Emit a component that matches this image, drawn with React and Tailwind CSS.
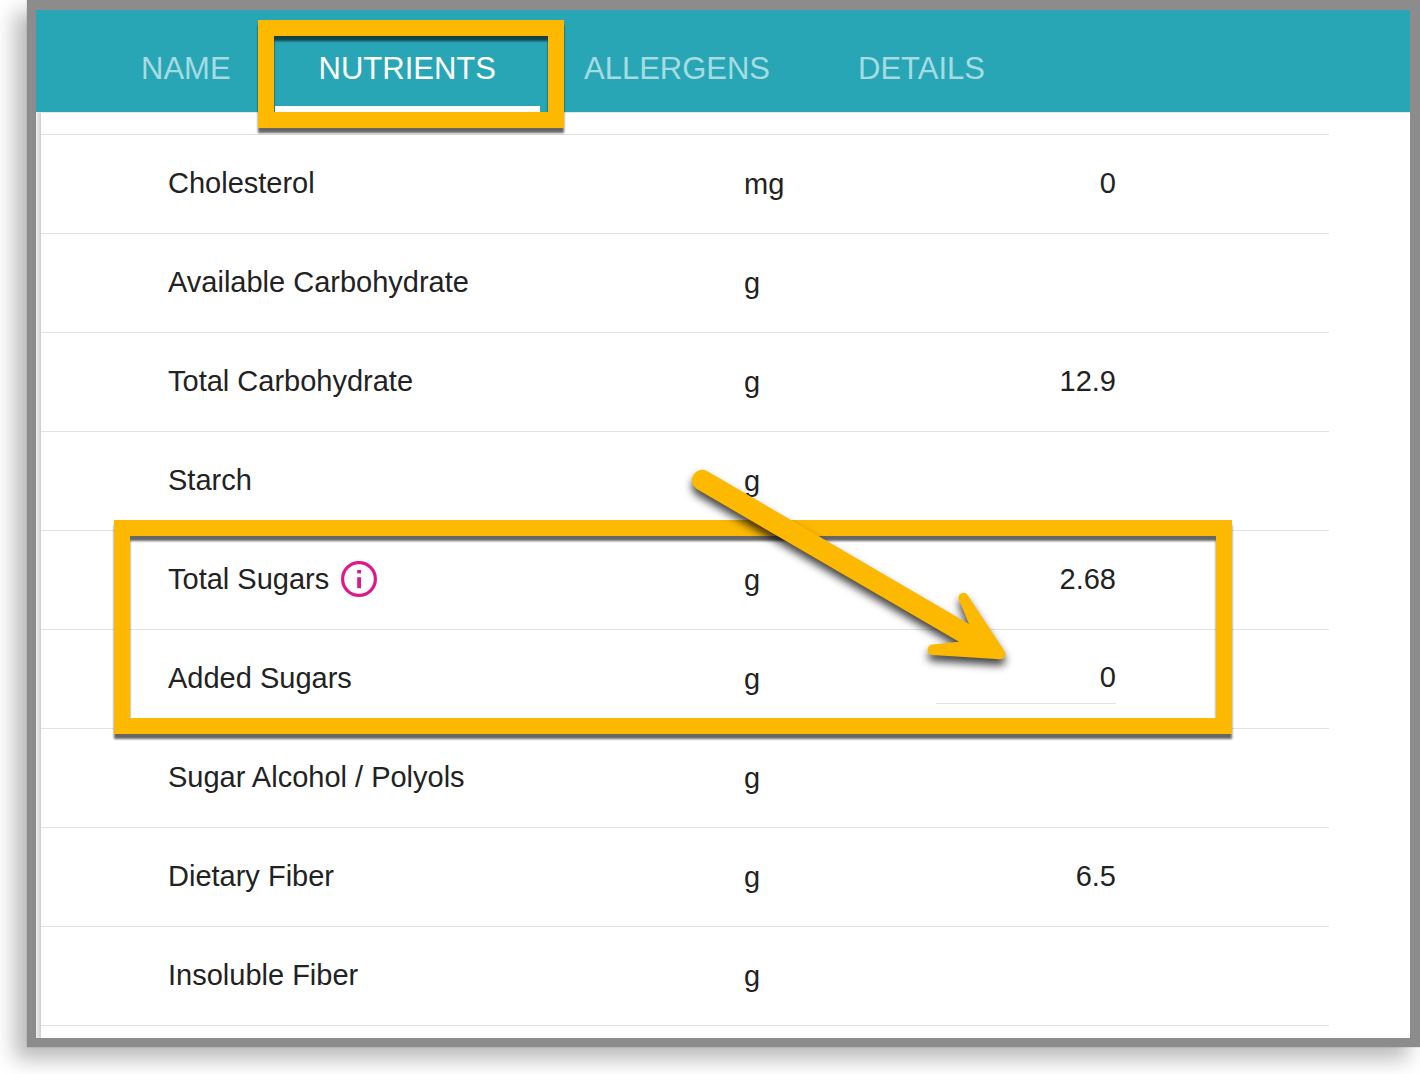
const tabs = ["NAME", "NUTRIENTS", "ALLERGENS", "DETAILS"];
const activeTab = "NUTRIENTS";

const nutrients = [
  { name: "Cholesterol", unit: "mg", value: "0" },
  { name: "Available Carbohydrate", unit: "g", value: "" },
  { name: "Total Carbohydrate", unit: "g", value: "12.9" },
  { name: "Starch", unit: "g", value: "" },
  { name: "Total Sugars", unit: "g", value: "2.68", info: true },
  { name: "Added Sugars", unit: "g", value: "0", editable: true },
  { name: "Sugar Alcohol / Polyols", unit: "g", value: "" },
  { name: "Dietary Fiber", unit: "g", value: "6.5" },
  { name: "Insoluble Fiber", unit: "g", value: "" },
];

const InfoIcon = () => (
  <svg viewBox="0 0 36 36" className="w-9 h-9" fill="none" aria-hidden="true">
    <circle cx="18" cy="18" r="16.4" stroke="#e0168c" strokeWidth="3.2" />
    <rect x="16.2" y="9" width="3.8" height="3.4" fill="#e0168c" />
    <rect x="16.2" y="16.2" width="3.8" height="11" fill="#e0168c" />
  </svg>
);

const Arrow = () => (
  <svg
    viewBox="0 0 340 220"
    className="w-[340px] h-[220px] overflow-visible drop-shadow-[0_6px_4px_rgba(0,0,0,0.75)]"
    aria-hidden="true"
  >
    <path
      d="M27.8 11.4 L289 164 L278.7 139.3 A5 5 0 0 1 287.7 135.2 L324.4 191 A5.2 5.2 0 0 1 319.6 199.2 L252.5 195 A5.2 5.2 0 0 1 253 184.6 L279 181.7 L16.7 29 A10.3 10.3 0 0 1 27.8 11.4 Z"
      fill="#fcb900"
    />
  </svg>
);

const Tab = ({ label }) => {
  const active = label === activeTab;
  return (
    <button
      type="button"
      role="tab"
      aria-selected={active}
      className={`relative px-11 pt-[41px] pb-[19px] border-b-6 text-[31px] leading-9 ${
        active ? "text-white border-white" : "text-[#a6dbe1] border-transparent"
      }`}
    >
      {label}
      {active && (
        <span className="absolute top-2.5 -bottom-[22px] -left-[17px] -right-6 border-16 border-[#fcb900] drop-shadow-[0_5px_1px_rgba(0,0,0,0.6)]" />
      )}
    </button>
  );
};

const NutrientRow = ({ row }) => {
  return (
    <tr className="border-b border-[#e2e2e2]">
      <th scope="row" className="pt-[30px] pb-8 pl-[127px] w-[703px] font-normal text-left">
        <div className="flex items-center gap-3 h-9">
          {row.name}
          {row.info && (
            <button type="button" aria-label="About total sugars">
              <InfoIcon />
            </button>
          )}
        </div>
      </th>
      <td className="w-[192px]">{row.unit}</td>
      <td className="pr-[213px] pb-0.5 text-right">
        {row.editable ? (
          <input
            type="text"
            aria-label={row.name}
            defaultValue={row.value}
            className="block w-[180px] h-[52px] ml-auto border-b border-[#e2e2e2] text-right outline-none"
          />
        ) : (
          row.value
        )}
      </td>
    </tr>
  );
};

const App = () => {
  return (
    <div className="bg-white pl-[27px] pb-[27px] overflow-hidden font-['Liberation_Sans',Arial,sans-serif]">
      <div className="border-t-10 border-r-10 border-b-9 border-l-9 border-[#8c8c8c] bg-white shadow-[0_0_1px_rgba(0,0,0,0.4),-12px_12px_20px_rgba(0,0,0,0.28)]">
        {/* Tab bar */}
        <div
          role="tablist"
          className="relative z-10 flex pl-[61px] bg-[#28a6b5] shadow-[0_1px_0_#e6e6e6]"
        >
          {tabs.map((tab) => (
            <Tab key={tab} label={tab} />
          ))}
        </div>

        {/* Nutrient list */}
        <div className="flex">
          <div className="w-[5px] bg-gradient-to-r from-[#f0f0f0] to-[#cfcfcf]" />
          <div className="flex-1 pt-[22px] pb-3 pr-[81px]">
            <div className="relative">
              <table className="w-full table-fixed border-collapse border-t border-[#e2e2e2] text-[29px] leading-9 text-[#222222]">
                <tbody>
                  {nutrients.map((row) => (
                    <NutrientRow key={row.name} row={row} />
                  ))}
                </tbody>
              </table>

              {/* Sugar rows callout */}
              <div className="absolute top-[386px] left-[73px] right-[97px] h-[214px] border-16 border-[#fcb900] drop-shadow-[0_5px_1px_rgba(0,0,0,0.6)] pointer-events-none" />
              <div className="absolute top-[326px] right-[309px] pointer-events-none">
                <Arrow />
              </div>
            </div>
          </div>
        </div>
      </div>
    </div>
  );
};

export default App;
